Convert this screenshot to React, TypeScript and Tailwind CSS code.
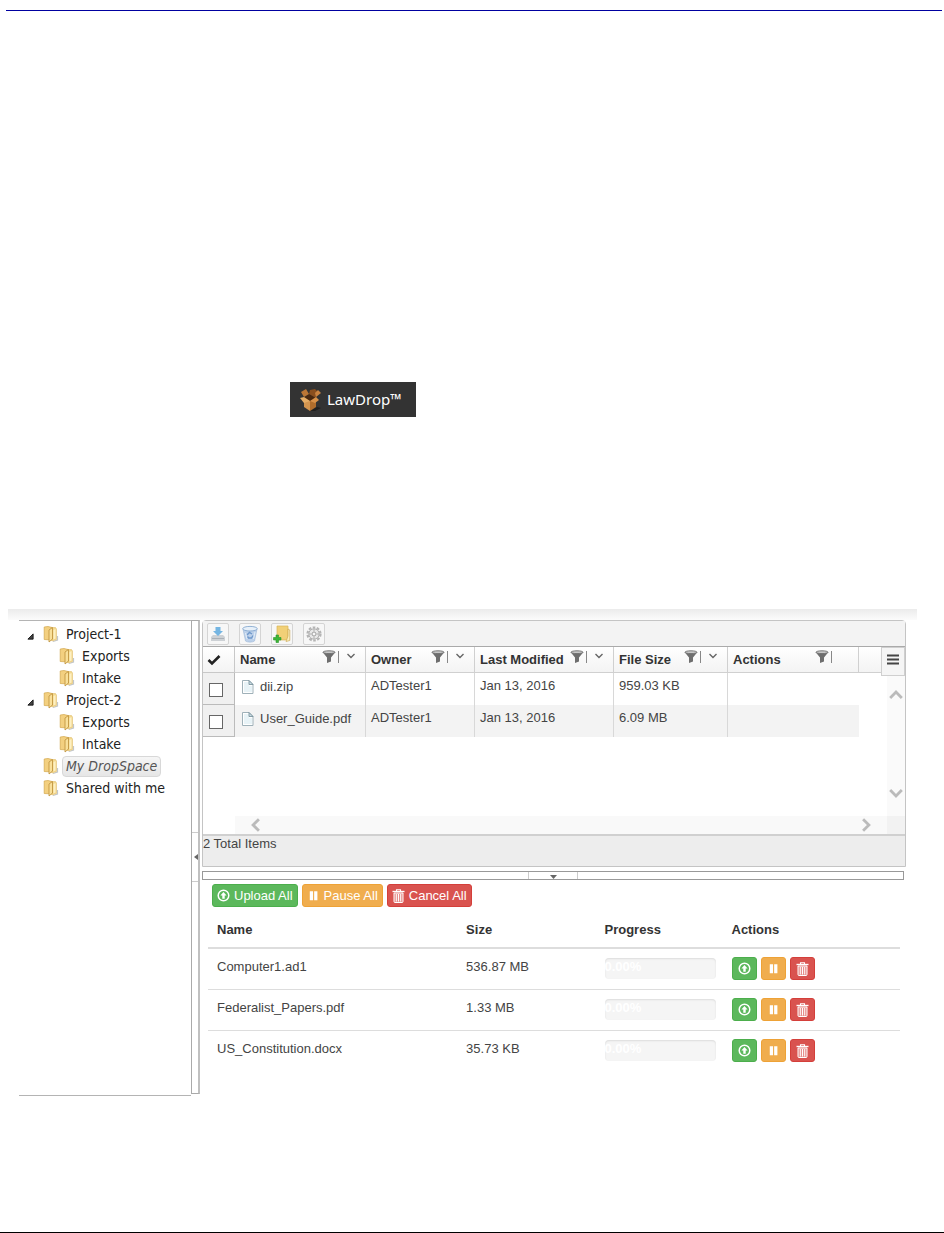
import { useState } from 'react';
import clsx from 'clsx';

interface TreeNode {
  label: string;
  level: number;
  expandable?: boolean;
}

const TREE: TreeNode[] = [
  { label: 'Project-1', level: 0, expandable: true },
  { label: 'Exports', level: 1 },
  { label: 'Intake', level: 1 },
  { label: 'Project-2', level: 0, expandable: true },
  { label: 'Exports', level: 1 },
  { label: 'Intake', level: 1 },
  { label: 'My DropSpace', level: 0 },
  { label: 'Shared with me', level: 0 },
];

const COLUMNS = [
  { label: 'Name', width: 'w-[131px]', sortable: true },
  { label: 'Owner', width: 'w-[109px]', sortable: true },
  { label: 'Last Modified', width: 'w-[139px]', sortable: true },
  { label: 'File Size', width: 'w-[114px]', sortable: true },
  { label: 'Actions', width: 'w-[131px]', sortable: false },
];

const FILES = [
  { name: 'dii.zip', owner: 'ADTester1', modified: 'Jan 13, 2016', size: '959.03 KB' },
  { name: 'User_Guide.pdf', owner: 'ADTester1', modified: 'Jan 13, 2016', size: '6.09 MB' },
];

const UPLOADS = [
  { name: 'Computer1.ad1', size: '536.87 MB' },
  { name: 'Federalist_Papers.pdf', size: '1.33 MB' },
  { name: 'US_Constitution.docx', size: '35.73 KB' },
];

function FolderIcon() {
  return (
    <svg className="h-[18px] w-4 shrink-0" viewBox="0 0 16 18" fill="none">
      <path d="M10 16.500l4.500-1.500v-4" stroke="#c2c6ca" strokeWidth="1.200" />
      <path d="M7 2.500h5.500l1 1.500v10.500L9 16z" fill="#f3d88c" stroke="#e0bf70" strokeWidth=".6" />
      <path d="M10.500 5l2-1v9.500l-2 1z" fill="#fdf0c4" />
      <path d="M1.200 2L5 1.500l4 1V15l-7.800-.5z" fill="#f3d080" stroke="#d3a64a" strokeWidth=".7" />
      <path d="M6 5l3.500-2.500V14L6 17z" fill="#f9e09a" stroke="#bd8f38" strokeWidth=".8" />
    </svg>
  );
}

function BoxIcon() {
  return (
    <svg className="h-6 w-6 shrink-0" viewBox="0 0 24 24">
      <path d="M11 23l7-4 4 1-6 3z" fill="#1f1f1f" />
      <path d="M5 10l6 3v10l-6-4z" fill="#d4954f" />
      <path d="M11 13l6-3v9l-6 4z" fill="#b06d2c" />
      <path d="M5 10l5-4 7 4-6 3z" fill="#4a280e" />
      <path d="M10 6l1-4 5-1 2 2-1 7z" fill="#8a4f1e" />
      <path d="M5 9L2 4l5-3 3 5z" fill="#bb7635" />
      <path d="M5 9l-4 1 4 5 6-2z" fill="#e6ad66" />
      <path d="M17 9l5-4-3-3-3 3z" fill="#c98340" />
      <path d="M17 9l3 3-4 3-5-2z" fill="#d89148" />
    </svg>
  );
}

function FileIcon() {
  return (
    <svg className="h-4 w-3 shrink-0" viewBox="0 0 12 16" fill="none">
      <path d="M.5 1.500h6.500l4 4V14.500H.5z" fill="#fff" stroke="#9fb1b9" />
      <path d="M2 3h5v4h3v6H2z" fill="#e8f3f7" />
      <path d="M7 1.500v4h4z" fill="#cbdce4" stroke="#6f8a96" strokeWidth=".8" />
    </svg>
  );
}

function FilterIcon() {
  return (
    <svg className="h-[14px] w-[14px]" viewBox="0 0 14 14">
      <path d="M.5 2L5 7.500V13l4-1.500v-4L13.500 2z" fill="#6e6e6e" />
      <ellipse cx="7" cy="2.200" rx="6" ry="1.400" fill="#c8c8c8" stroke="#6e6e6e" strokeWidth=".9" />
    </svg>
  );
}

function Chevron({ d, className }: { d: string; className: string }) {
  return (
    <svg className={className} viewBox="0 0 12 12" fill="none" stroke="currentColor">
      <path d={d} />
    </svg>
  );
}

function UploadIcon() {
  return (
    <svg className="h-[13px] w-[13px] shrink-0" viewBox="0 0 14 14">
      <circle cx="7" cy="7" r="5.700" fill="none" stroke="#fff" strokeWidth="1.600" />
      <path d="M7 3.200L10.300 7H8.300v3.500H5.700V7H3.700z" fill="#fff" />
    </svg>
  );
}

function PauseIcon() {
  return (
    <svg className="h-[13px] w-[13px] shrink-0" viewBox="0 0 14 14" fill="#fff">
      <path d="M3 2.500h3.500v9.500H3zM7.700 2.500h3.500v9.500H7.700z" />
    </svg>
  );
}

function TrashIcon() {
  return (
    <svg className="h-[14px] w-[13px] shrink-0" viewBox="0 0 13 14" fill="none" stroke="#fff">
      <path d="M4.500 2V.7h4V2" strokeWidth="1.100" />
      <path d="M.5 2.500h12" strokeWidth="1.400" />
      <path d="M2 4h9v8.500a1 1 0 0 1-1 1H3a1 1 0 0 1-1-1z" fill="#fff" fillOpacity=".35" />
      <path d="M4.300 5v7.500M6.500 5v7.500M8.700 5v7.500" />
    </svg>
  );
}

function DownloadTool() {
  return (
    <svg className="h-4 w-4" viewBox="0 0 16 16">
      <path d="M3 9h10l2 2v4H1v-4z" fill="#cdd1d5" />
      <path d="M2 12.500h12" stroke="#aab1b8" />
      <path d="M5.500 1h5v4H13L8 10 3 5h2.500z" fill="#74b5e2" />
    </svg>
  );
}

function BinTool() {
  return (
    <svg className="h-[18px] w-[18px]" viewBox="0 0 18 18">
      <path d="M2 4l2.500 12c2 1.500 7 1.500 9 0L16 4z" fill="#bdd1ea" stroke="#9cb7d6" strokeWidth=".6" />
      <ellipse cx="9" cy="3.700" rx="7.300" ry="2.300" fill="#e7f0f9" stroke="#87a9cf" strokeWidth=".9" />
      <path d="M6 10l2.500-2.500L11 9M12 10.500L10.500 13H7.500L6.500 11.500" fill="none" stroke="#6f98cb" strokeWidth="1.400" />
      <path d="M4.500 8l1.500 6M14 7l-1.500 7" stroke="#e3edf7" />
    </svg>
  );
}

function NewFolderTool() {
  return (
    <svg className="h-[18px] w-[18px]" viewBox="0 0 18 18">
      <path d="M4 1h11v14H4z" fill="#f1d077" stroke="#d8b45a" strokeWidth=".7" />
      <path d="M15 4l1.800 1v10.500L13 16.500 15 11z" fill="#fbeeba" stroke="#cdaa54" strokeWidth=".7" />
      <path d="M3 10h2.500v2.500H8V15H5.500v2.500H3V15H.5v-2.500H3z" fill="#3cb637" stroke="#2c952b" strokeWidth=".6" />
    </svg>
  );
}

function GearTool() {
  return (
    <svg className="h-4 w-4" viewBox="0 0 16 16" fill="none">
      <circle cx="8" cy="8" r="6.500" stroke="#b4b4b4" strokeWidth="2.200" strokeDasharray="2.600 1.480" />
      <circle cx="8" cy="8" r="5.200" fill="#e8e8e8" stroke="#b0b0b0" />
      <circle cx="8" cy="8" r="2" fill="#f7f7f7" stroke="#a0a0a0" />
      <path d="M8 3v2.500M8 10.500V13M3 8h2.500M10.500 8H13" stroke="#b0b0b0" />
    </svg>
  );
}

const TOOLS = [
  { label: 'Download', icon: <DownloadTool /> },
  { label: 'Delete', icon: <BinTool /> },
  { label: 'New folder', icon: <NewFolderTool /> },
  { label: 'Settings', icon: <GearTool /> },
];

const UPLOAD_ACTIONS = [
  { label: 'Upload', color: 'bg-[#5cb85c] border-[#4cae4c]', icon: <UploadIcon /> },
  { label: 'Pause', color: 'bg-[#f0ad4e] border-[#eea236]', icon: <PauseIcon /> },
  { label: 'Cancel', color: 'bg-[#d9534f] border-[#d43f3a]', icon: <TrashIcon /> },
];

function FolderTree() {
  const [selected, setSelected] = useState(6);

  return (
    <nav className="w-[172px] shrink-0 border-y border-[#b4b4b4] pt-[2px] font-['DejaVu_Sans_Condensed','DejaVu_Sans',sans-serif] text-[14px] leading-[18px] text-[#222]">
      <ul>
        {TREE.map((node, i) => (
          <li key={i} className={clsx('flex h-[22px] items-center', node.level === 0 ? 'pl-2' : 'pl-6')}>
            <span className="flex w-4 shrink-0">
              {node.expandable && (
                <svg className="mt-1 h-[7px] w-[7px]" viewBox="0 0 8 8">
                  <path d="M7 1v6H1z" fill="#444" stroke="#111" />
                </svg>
              )}
            </span>
            <FolderIcon />
            <button
              onClick={() => setSelected(i)}
              className={clsx(
                'ml-[3px] h-[21px] rounded-sm border px-[3px] whitespace-nowrap',
                selected === i
                  ? 'border-[#d8d8d8] bg-linear-to-b from-[#f6f6f6] to-[#e6e6e6] text-[#555] italic'
                  : 'border-transparent',
              )}
            >
              {node.label}
            </button>
          </li>
        ))}
      </ul>
    </nav>
  );
}

function FileGrid() {
  return (
    <section className="rounded-t-sm border border-[#c4c4c4]">
      <div className="flex h-[26px] items-center gap-[10px] border-b border-[#aaa] bg-[#f3f3f3] px-1">
        {TOOLS.map((tool) => (
          <button
            key={tool.label}
            aria-label={tool.label}
            className="flex h-[22px] w-[22px] items-center justify-center rounded-xs border border-[#d4d4d4] bg-[#f7f7f7]"
          >
            {tool.icon}
          </button>
        ))}
      </div>

      <div className="flex">
        <table className="flex-1 table-fixed border-separate border-spacing-0 self-start text-left text-[13px] leading-4 text-[#444]">
          <thead>
            <tr className="h-[26px] bg-linear-to-b from-white to-[#f3f3f3] text-[#333]">
              <th className="w-8 border-r border-b border-[#c8c8c8] p-0 pl-1">
                <svg className="h-3 w-[14px]" viewBox="0 0 14 12" fill="none" stroke="#222" strokeWidth="2.600">
                  <path d="M1.500 6l3.500 3.500L12.500 2" />
                </svg>
              </th>
              {COLUMNS.map((col) => (
                <th key={col.label} className={clsx('border-r border-b border-[#d0d0d0] p-0 pl-[5px]', col.width)}>
                  <div className="flex items-center">
                    <span className="flex-1 whitespace-nowrap">{col.label}</span>
                    <span className="flex items-center pb-[6px] text-[#666]">
                      <FilterIcon />
                      <span className="ml-[2px] h-3 w-px bg-[#888]" />
                      {col.sortable ? (
                        <Chevron d="M2.500 3L6 6.500 9.500 3" className="mr-2 ml-[6px] h-3 w-3 stroke-[1.400]" />
                      ) : (
                        <span className="w-[26px]" />
                      )}
                    </span>
                  </div>
                </th>
              ))}
              <th className="border-b border-[#d0d0d0] p-0" />
            </tr>
          </thead>
          <tbody>
            {FILES.map((file, i) => (
              <tr key={file.name} className={clsx('h-8 align-top', i % 2 === 1 && 'bg-[#f3f3f3]')}>
                <td className="border-r border-b border-[#bbb] bg-[#f0f0f0] p-0 pt-[10px] pl-[6px]">
                  <input
                    type="checkbox"
                    aria-label={`Select ${file.name}`}
                    className="block h-[14px] w-[14px] appearance-none border border-[#666] bg-white"
                  />
                </td>
                <td className="border-r border-[#d8d8d8] p-0 pt-[6px] pl-[7px]">
                  <span className="flex items-center gap-[6px]">
                    <FileIcon />
                    {file.name}
                  </span>
                </td>
                <td className="border-r border-[#d8d8d8] p-0 pt-[5px] pl-[5px]">{file.owner}</td>
                <td className="border-r border-[#d8d8d8] p-0 pt-[5px] pl-[5px]">{file.modified}</td>
                <td className="border-r border-[#d8d8d8] p-0 pt-[5px] pl-[5px]">{file.size}</td>
                <td className="p-0" />
                <td className="bg-white p-0" />
              </tr>
            ))}
          </tbody>
        </table>

        <div className="flex h-[169px] w-6 shrink-0 flex-col items-end">
          <button
            aria-label="Grid menu"
            className="flex h-[29px] w-6 items-start justify-center border border-[#cfcfcf] bg-[#f5f5f5] pt-[6px]"
          >
            <svg className="h-[11px] w-3" viewBox="0 0 12 11" stroke="#444" strokeWidth="1.800">
              <path d="M0 1.500h12M0 5.500h12M0 9.500h12" />
            </svg>
          </button>
          <div className="flex w-[18px] flex-1 flex-col items-center justify-between bg-[#fafafa] pt-3 pb-4 text-[#bbb]">
            <button aria-label="Scroll up">
              <Chevron d="M1 8.500L6 3.500l5 5" className="h-[14px] w-[14px] stroke-[2.400]" />
            </button>
            <button aria-label="Scroll down">
              <Chevron d="M1 3.500l5 5 5-5" className="h-[14px] w-[14px] stroke-[2.400]" />
            </button>
          </div>
        </div>
      </div>

      <div className="ml-8 flex h-[18px] items-center bg-[#f9f9f9] text-[#bbb]">
        <button aria-label="Scroll left" className="ml-[14px]">
          <Chevron d="M8.500 1l-5 5 5 5" className="h-[14px] w-[14px] stroke-[2.400]" />
        </button>
        <button aria-label="Scroll right" className="mr-[14px] ml-auto">
          <Chevron d="M3.500 1l5 5-5 5" className="h-[14px] w-[14px] stroke-[2.400]" />
        </button>
        <span className="h-full w-[18px] bg-[#f2f2f2]" />
      </div>

      <div className="h-8 border-t-2 border-[#d0d0d0] bg-[#ededed] text-[13px] leading-4 text-[#444]">
        2 Total Items
      </div>
    </section>
  );
}

function UploadQueue() {
  return (
    <section className="px-[6px] pt-1 text-[13px] text-[#444]">
      <div className="flex gap-1 pl-1">
        {UPLOAD_ACTIONS.map((action) => (
          <button
            key={action.label}
            className={clsx(
              'flex h-[23px] items-center gap-1 rounded-[3px] border px-1 whitespace-nowrap text-white',
              action.color,
            )}
          >
            {action.icon}
            {action.label} All
          </button>
        ))}
      </div>

      <table className="w-full table-fixed text-left leading-[18px]">
        <thead>
          <tr className="h-[41px] border-b-2 border-[#ddd] text-[#333]">
            <th className="w-[36%] p-0 pt-[6px] pl-[9px]">Name</th>
            <th className="w-[20%] p-0 pt-[6px] pl-[9px]">Size</th>
            <th className="w-[127px] p-0 pt-[6px] pl-[9px]">Progress</th>
            <th className="p-0 pt-[6px] pl-[9px]">Actions</th>
          </tr>
        </thead>
        <tbody>
          {UPLOADS.map((file) => (
            <tr key={file.name} className="h-[41px] border-b border-[#ddd] last:border-b-0">
              <td className="p-0 pb-1 pl-[9px]">{file.name}</td>
              <td className="p-0 pb-1 pl-[9px]">{file.size}</td>
              <td className="p-0 pr-[7px] pl-[9px]">
                <div
                  role="progressbar"
                  aria-label={`${file.name} progress`}
                  aria-valuenow={0}
                  className="h-[21px] rounded-sm bg-[#f5f5f5] text-[13px] leading-[18px] font-bold text-white inset-shadow-[0_1px_2px_rgba(0,0,0,0.1)]"
                >
                  0.00%
                </div>
              </td>
              <td className="p-0 pl-[9px]">
                <div className="flex gap-1">
                  {UPLOAD_ACTIONS.map((action) => (
                    <button
                      key={action.label}
                      aria-label={`${action.label} ${file.name}`}
                      className={clsx(
                        'flex h-[23px] w-[25px] items-center justify-center rounded-[3px] border',
                        action.color,
                      )}
                    >
                      {action.icon}
                    </button>
                  ))}
                </div>
              </td>
            </tr>
          ))}
        </tbody>
      </table>
    </section>
  );
}

export default function App() {
  return (
    <div className="border-b border-black bg-white pt-[10px] pb-[136px] font-['Liberation_Sans',Arial,sans-serif]">
      <hr className="mr-[2px] ml-[6px] border-t border-[#0000a0]" />

      <div className="pt-[371px] pl-[290px]">
        <button className="flex h-[35px] w-[126px] items-center gap-1 bg-[#333] pl-[9px] font-['Noto_Sans',sans-serif] text-[15px] text-white">
          <BoxIcon />
          LawDrop™
        </button>
      </div>

      <main className="mt-48 mr-[27px] ml-2">
        <div className="h-[11px] bg-linear-to-b from-[#ebebeb] to-[#fcfcfc]" />
        <div className="flex pr-[11px] pl-[11px]">
          <FolderTree />
          <div className="mb-[2px] flex w-[9px] shrink-0 flex-col justify-center border border-r-2 border-[#aaa] border-r-[#c0c0c0]">
            <button
              aria-label="Collapse folders"
              className="flex h-[50px] items-center justify-end border-y border-[#ccc]"
            >
              <svg className="h-[6px] w-1" viewBox="0 0 4 6">
                <path d="M4 0v6L0 3z" fill="#666" />
              </svg>
            </button>
          </div>

          <div className="ml-[2px] min-w-0 flex-1">
            <FileGrid />
            <div className="mt-1 mr-[2px] flex h-[9px] justify-center border border-[#999]">
              <button aria-label="Collapse uploads" className="flex w-[50px] items-end justify-center border-x border-[#ccc]">
                <svg className="h-1 w-[7px]" viewBox="0 0 7 4">
                  <path d="M0 0h7L3.500 4z" fill="#666" />
                </svg>
              </button>
            </div>
            <UploadQueue />
            <div className="h-[25px]" />
          </div>
        </div>
      </main>
    </div>
  );
}
